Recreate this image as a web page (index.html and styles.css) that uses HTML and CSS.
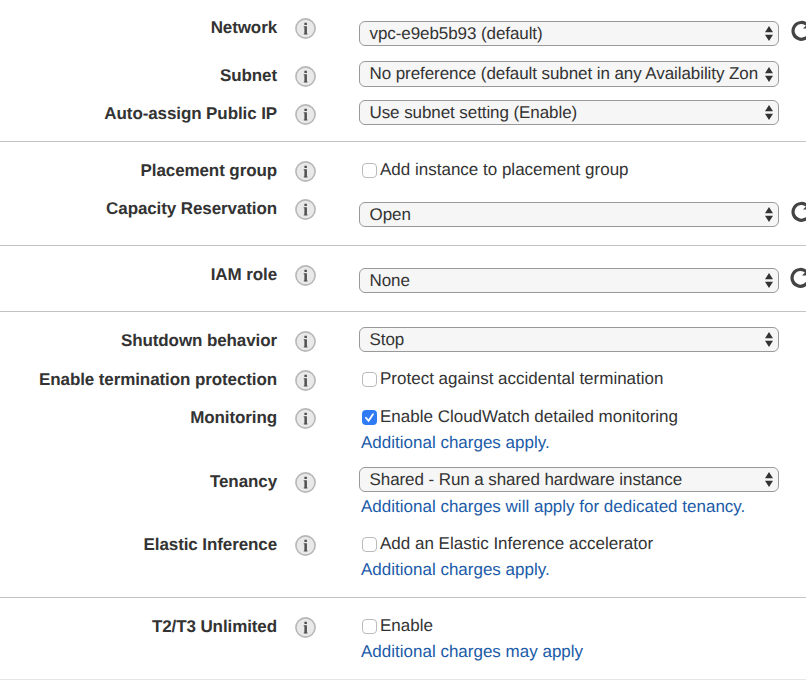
FILE: index.html
```
<!DOCTYPE html>
<html lang="en">
<head>
<meta charset="utf-8">
<title>Configure Instance Details</title>
<link rel="stylesheet" href="styles.css">
</head>
<body>
<svg class="defs" width="0" height="0" aria-hidden="true">
  <symbol id="info" viewBox="0 0 21 21">
    <circle cx="10.5" cy="10.5" r="9.6" fill="#e9e9e9" stroke="#b7b7b7" stroke-width="1.6"/>
    <path d="M9.4 4.8h2.5v2.2H9.4zM8.7 8.3h3.2v7.2h.6v.9H8.8v-.9h.6V9.2h-.7z" fill="#505050"/>
  </symbol>
  <symbol id="arrows" viewBox="0 0 8 15">
    <path d="M4 0l4 6.3H0zM0 8.7h8L4 15z" fill="#333"/>
  </symbol>
  <symbol id="refresh" viewBox="0 0 22 22">
    <path d="M16.5 5A8.4 8.4 0 1 0 18.7 12.5" fill="none" stroke="#444" stroke-width="3.2"/>
    <path d="M19.5 1v7.5H12z" fill="#444"/>
  </symbol>
</svg>
<main class="form">
  <section class="group first">
    <div class="row tall">
      <label class="name">Network</label><svg class="info"><use href="#info"/></svg>
      <div class="field low"><div class="select"><span>vpc-e9eb5b93 (default)</span><svg class="arrows"><use href="#arrows"/></svg></div></div>
      <svg class="refresh"><use href="#refresh"/></svg>
    </div>
    <div class="row">
      <label class="name">Subnet</label><svg class="info"><use href="#info"/></svg>
      <div class="field raised"><div class="select deep"><span>No preference (default subnet in any Availability Zon</span><svg class="arrows"><use href="#arrows"/></svg></div></div>
    </div>
    <div class="row">
      <label class="name">Auto-assign Public IP</label><svg class="info"><use href="#info"/></svg>
      <div class="field"><div class="select"><span>Use subnet setting (Enable)</span><svg class="arrows"><use href="#arrows"/></svg></div></div>
    </div>
  </section>
  <section class="group">
    <div class="row">
      <label class="name">Placement group</label><svg class="info"><use href="#info"/></svg>
      <div class="field"><div class="check"><i class="box"></i><span>Add instance to placement group</span></div></div>
    </div>
    <div class="row medium">
      <label class="name">Capacity Reservation</label><svg class="info"><use href="#info"/></svg>
      <div class="field low"><div class="select"><span>Open</span><svg class="arrows"><use href="#arrows"/></svg></div></div>
      <svg class="refresh"><use href="#refresh"/></svg>
    </div>
  </section>
  <section class="group">
    <div class="row medium">
      <label class="name">IAM role</label><svg class="info"><use href="#info"/></svg>
      <div class="field low"><div class="select"><span>None</span><svg class="arrows"><use href="#arrows"/></svg></div></div>
      <svg class="refresh near"><use href="#refresh"/></svg>
    </div>
  </section>
  <section class="group">
    <div class="row shutdown">
      <label class="name">Shutdown behavior</label><svg class="info"><use href="#info"/></svg>
      <div class="field"><div class="select"><span>Stop</span><svg class="arrows"><use href="#arrows"/></svg></div></div>
    </div>
    <div class="row">
      <label class="name">Enable termination protection</label><svg class="info"><use href="#info"/></svg>
      <div class="field"><div class="check"><i class="box"></i><span>Protect against accidental termination</span></div></div>
    </div>
    <div class="row noted monitoring">
      <label class="name">Monitoring</label><svg class="info"><use href="#info"/></svg>
      <div class="field"><div class="check"><i class="box on"><svg viewBox="0 0 15 15"><path d="M4 7.8l2.6 3L11 4.2"/></svg></i><span>Enable CloudWatch detailed monitoring</span></div><a class="note">Additional charges apply.</a></div>
    </div>
    <div class="row noted">
      <label class="name">Tenancy</label><svg class="info"><use href="#info"/></svg>
      <div class="field raised"><div class="select"><span>Shared - Run a shared hardware instance</span><svg class="arrows"><use href="#arrows"/></svg></div><a class="note below-select">Additional charges will apply for dedicated tenancy.</a></div>
    </div>
    <div class="row noted">
      <label class="name">Elastic Inference</label><svg class="info"><use href="#info"/></svg>
      <div class="field"><div class="check"><i class="box"></i><span>Add an Elastic Inference accelerator</span></div><a class="note">Additional charges apply.</a></div>
    </div>
  </section>
  <section class="group last">
    <div class="row noted">
      <label class="name">T2/T3 Unlimited</label><svg class="info"><use href="#info"/></svg>
      <div class="field"><div class="check"><i class="box"></i><span>Enable</span></div><a class="note">Additional charges may apply</a></div>
    </div>
  </section>
</main>
</body>
</html>
```
FILE: styles.css
```
* { box-sizing: border-box; }
body {
  margin: 0;
  background: #fff;
  color: #333;
  font: 17px/20px "Liberation Sans", Arial, sans-serif;
  text-rendering: geometricPrecision;
  overflow: hidden;
}
.defs { position: absolute; }
.group { padding-top: 18px; border-bottom: 1px solid #c3c3c3; }
.group.first { padding-top: 17px; }
.group.last { border-color: #e6e6e6; }
.row {
  display: grid;
  grid-template-columns: 277px 21px 420px 22px;
  column-gap: 0;
  align-items: start;
  height: 38px;
}
.row.tall { height: 48px; }
.row.medium { height: 47px; }
.row.shutdown { height: 39px; }
.row.noted { height: 63px; }
.row.monitoring { height: 64px; }
.name {
  padding-top: 1px;
  text-align: right;
  font-weight: bold;
  letter-spacing: -0.1px;
  white-space: nowrap;
}
.info { width: 21px; height: 21px; margin: 1px 0 0 18px; }
.field { margin: -3px 0 0 61px; width: 420px; }
.field.low { margin-top: 4px; }
.field.raised { margin-top: -4px; }
.select {
  display: flex;
  align-items: center;
  justify-content: space-between;
  height: 25px;
  padding: 0 4px 0 9.5px;
  border: 1px solid #999;
  border-radius: 6px;
  background: #f6f6f6;
}
.select.deep { height: 26px; }
.select span {
  letter-spacing: -0.08px;
  white-space: nowrap;
}
.arrows { width: 10px; height: 15px; flex: none; }
.refresh { width: 22px; height: 22px; margin: 3px 0 0 73px; }
.refresh.near { margin-left: 72px; }
.check {
  display: flex;
  align-items: center;
  height: 26px;
  padding: 0 0 0 3px;
  gap: 3px;
}
.box {
  width: 15px;
  height: 15px;
  border: 1px solid #bbb;
  border-radius: 4px;
  background: #fff;
}
.box.on { border: 0; background: #2f7bf6; }
.box svg { display: block; fill: none; stroke: #fff; stroke-width: 1.8; stroke-linecap: round; }
.note {
  display: block;
  padding: 3px 0 0 2px;
  color: #1b5ba8;
}
.note.below-select { padding-top: 5px; }
```
